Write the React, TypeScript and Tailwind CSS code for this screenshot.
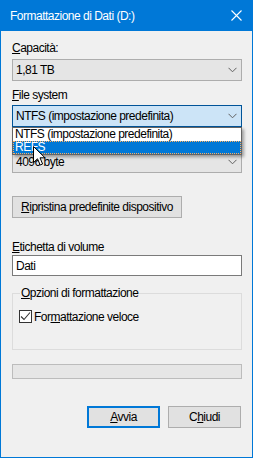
import React from "react";

function Chevron() {
  return (
    <svg width="9" height="6" viewBox="0 0 9 6" className="shrink-0">
      <polyline points="0.5,0.8 4.5,4.8 8.5,0.8" fill="none" stroke="#606060" strokeWidth="1" />
    </svg>
  );
}

function Combo({ text, active }: { text: string; active?: boolean }) {
  return (
    <div
      className={
        "h-[22px] w-[230px] flex items-center justify-between pl-[3px] pr-[4px] border " +
        (active ? "bg-[#cce4f7] border-[#005499]" : "bg-[#e5e5e5] border-[#adadad]")
      }
    >
      <span className="whitespace-nowrap">{text}</span>
      <Chevron />
    </div>
  );
}

export default function App() {
  return (
    <div className="w-[253px] h-[458px] bg-[#0078d7] px-[1px] pb-[1px] flex flex-col font-['Liberation_Sans',Arial,sans-serif] text-[12px] leading-[16px] tracking-[-0.5px] text-black">
      <div className="h-[31px] flex items-center justify-between pl-[9px] pr-[10px] text-white shrink-0">
        <span className="whitespace-nowrap">Formattazione di Dati (D:)</span>
        <svg width="11" height="11" viewBox="0 0 11 11">
          <path d="M0.5 0.5 L10.5 10.5 M10.5 0.5 L0.5 10.5" stroke="#ffffff" strokeWidth="1.1" fill="none" />
        </svg>
      </div>
      <div className="flex-1 bg-[#f0f0f0] relative px-[11px] flex flex-col">
        <div className="mt-[9px] h-[16px] whitespace-nowrap">
          <u>C</u>apacità:
        </div>
        <div className="mt-[3px]">
          <Combo text="1,81 TB" />
        </div>
        <div className="mt-[6px] h-[16px] whitespace-nowrap">
          <u>F</u>ile system
        </div>
        <div className="mt-[2px]">
          <Combo text="NTFS (impostazione predefinita)" active />
        </div>
        {/* label hidden behind the open list */}
        <div className="mt-[6px] h-[16px]" />
        <div className="mt-[2px]">
          <Combo text="4096 byte" />
        </div>
        <div className="mt-[23px]">
          <div className="h-[22px] w-[170px] flex items-center justify-center bg-[#e1e1e1] border border-[#adadad] whitespace-nowrap">
            <span>
              <u>R</u>ipristina predefinite dispositivo
            </span>
          </div>
        </div>
        <div className="mt-[21px] h-[16px] whitespace-nowrap">
          <u>E</u>tichetta di volume
        </div>
        <div className="h-[21px] w-[230px] bg-white border border-[#7a7a7a] flex items-center pl-[3px]">
          Dati
        </div>
        <div className="mt-[17px] h-[57px] w-[230px] border border-[#dcdcdc] relative pt-[14px] pl-[6px]">
          <div className="absolute left-[7px] top-[-9px] px-[1px] bg-[#f0f0f0] whitespace-nowrap">
            <u>O</u>pzioni di formattazione
          </div>
          <div className="flex items-center gap-[2px]">
            <div className="w-[13px] h-[13px] border border-[#333333] bg-white flex items-center justify-center">
              <svg width="11" height="11" viewBox="0 0 11 11">
                <polyline points="1,5.5 4,8.5 10,1.5" fill="none" stroke="#333333" strokeWidth="1.1" />
              </svg>
            </div>
            <span className="whitespace-nowrap mt-[1px]">
              For<u>m</u>attazione veloce
            </span>
          </div>
        </div>
        <div className="mt-[14px] h-[15px] w-[230px] bg-[#e6e6e6] border border-[#bcbcbc]" />
        <div className="mt-[27px] flex justify-end gap-[8px]">
          <div className="h-[22px] w-[73px] border-2 border-[#0078d7] bg-[#e1e1e1] flex items-center justify-center">
            <span>
              <u>A</u>vvia
            </span>
          </div>
          <div className="h-[22px] w-[73px] border border-[#adadad] bg-[#e1e1e1] flex items-center justify-center">
            <span>
              C<u>h</u>iudi
            </span>
          </div>
        </div>

        {/* open dropdown list */}
        <div className="absolute left-[11px] top-[96px] w-[230px] border border-[#646464] bg-white shadow-[2px_2px_3px_rgba(0,0,0,0.35)] leading-[13px]">
          <div className="h-[13px] pl-[2px] whitespace-nowrap">NTFS (impostazione predefinita)</div>
          <div className="h-[13px] bg-[#0078d7] text-white pl-[1px] border border-dotted border-[#ffb060] whitespace-nowrap leading-[11px]">
            REFS
          </div>
        </div>

        {/* mouse cursor */}
        <svg className="absolute left-[32px] top-[115px]" width="13" height="21" viewBox="0 0 13 21">
          <path
            d="M0.5 0.5 L0.5 16.5 L4.5 12.8 L7.2 19 L9.6 18 L7 11.8 L12 11.8 Z"
            fill="#ffffff"
            stroke="#000000"
            strokeWidth="1"
            strokeLinejoin="miter"
          />
        </svg>
      </div>
    </div>
  );
}
